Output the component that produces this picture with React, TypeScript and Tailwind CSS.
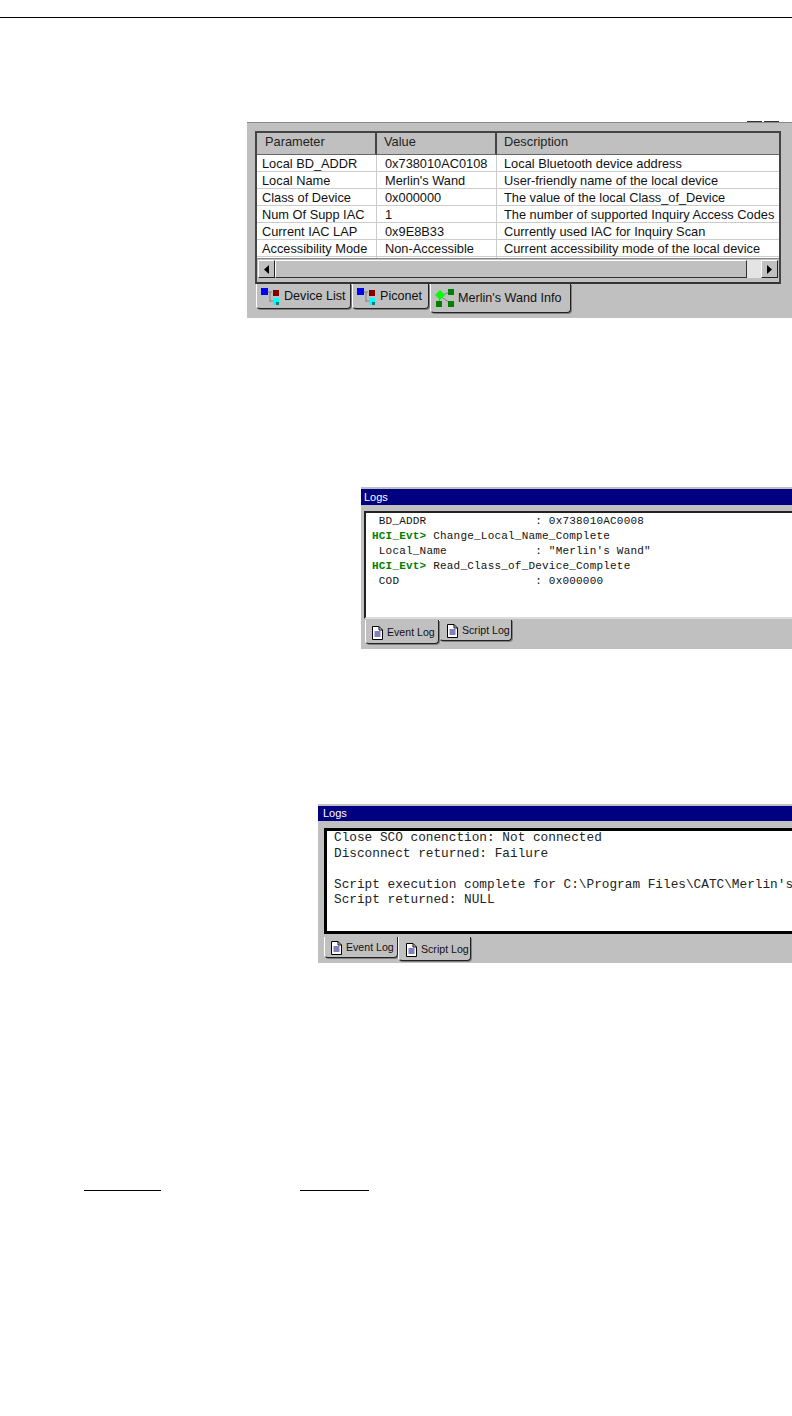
const sans = "font-['Liberation_Sans',Arial,sans-serif]";
const mono = "font-['Liberation_Mono','Courier_New',monospace]";

const rows = [
  ["Local BD_ADDR", "0x738010AC0108", "Local Bluetooth device address"],
  ["Local Name", "Merlin's Wand", "User-friendly name of the local device"],
  ["Class of Device", "0x000000", "The value of the local Class_of_Device"],
  ["Num Of Supp IAC", "1", "The number of supported Inquiry Access Codes"],
  ["Current IAC LAP", "0x9E8B33", "Currently used IAC for Inquiry Scan"],
  ["Accessibility Mode", "Non-Accessible", "Current accessibility mode of the local device"],
];

function NetIcon() {
  return (
    <svg width="20" height="19" viewBox="0 0 20 19" className="shrink-0">
      <path d="M7 5H12M10 5V15M10 14H13" stroke="#808080" fill="none" />
      <rect x="1" y="1" width="7" height="7" fill="#0000ff" />
      <rect x="13" y="3" width="6" height="6" fill="#800000" />
      <rect x="13" y="11" width="6" height="7" fill="#00ffff" />
      <rect x="16" y="15" width="3" height="3" fill="#008080" />
    </svg>
  );
}

function WandIcon() {
  return (
    <svg width="22" height="20" viewBox="0 0 22 20" className="shrink-0">
      <path d="M6 8L5 15M6 8L16 15M6 8L16 4" stroke="#808080" fill="none" />
      <path d="M6 2L11 7L6 12L1 7Z" fill="#00ff00" />
      <rect x="14" y="1" width="6" height="6" fill="#008000" />
      <rect x="2" y="13" width="6" height="6" fill="#008000" />
      <rect x="14" y="13" width="6" height="6" fill="#008000" />
    </svg>
  );
}

function DocIcon() {
  return (
    <svg width="12" height="14" viewBox="0 0 12 14" className="shrink-0">
      <path d="M1.5.5H8L11.5 4V13.5H1.5Z" fill="#fff" stroke="#000" />
      <path d="M8 .5V4H11.5" fill="none" stroke="#000" />
      <path d="M3.5 6H9.5M3.5 8H9.5M3.5 10H9.5" stroke="#000080" />
    </svg>
  );
}

function Tab({ active, className, children }: { active?: boolean; className: string; children: React.ReactNode }) {
  return (
    <div
      className={`flex items-center whitespace-nowrap border-l border-l-white border-r border-r-[#222] border-b border-b-[#222] rounded-b-[4px] shadow-[1px_1px_0_#808080] bg-[#c0c0c0] text-[#111] ${active ? "relative z-10" : ""} ${className}`}
    >
      {children}
    </div>
  );
}

function ArrowBtn({ dir }: { dir: "l" | "r" }) {
  return (
    <div className="w-[17px] h-[18px] bg-[#c0c0c0] border border-t-white border-l-white border-r-[#222] border-b-[#222] flex items-center justify-center shrink-0">
      <svg width="5" height="9" viewBox="0 0 5 9">
        <path d={dir === "l" ? "M5 0V9L0 4.5Z" : "M0 0V9L5 4.5Z"} fill="#000" />
      </svg>
    </div>
  );
}

function InfoPanel() {
  return (
    <div className={`ml-[247px] mt-[104px] w-[545px] h-[196px] bg-[#c0c0c0] border-t border-t-[#888] flex flex-col shrink-0 ${sans}`}>
      <div className="h-[0px] flex justify-end pr-[13px] gap-[2px]">
        <div className="w-[15px] h-[1px] bg-[#333] -mt-[2px]" />
        <div className="w-[15px] h-[1px] bg-[#333] -mt-[2px]" />
      </div>
      <div className="ml-[8px] mt-[8px] w-[526px] h-[153px] bg-white border-2 border-t-[#444] border-l-[#444] border-r-[#444] border-b-[#333] flex flex-col overflow-hidden shrink-0">
        <div className="h-[22px] bg-[#c0c0c0] grid grid-cols-[120px_120px_1fr] text-[12.8px] leading-[18px] text-[#222] shrink-0">
          <div className="pl-[8px] border-r-2 border-r-[#444] border-b border-b-[#666]">Parameter</div>
          <div className="pl-[7px] border-r-2 border-r-[#444] border-b border-b-[#666]">Value</div>
          <div className="pl-[7px] border-b border-b-[#666]">Description</div>
        </div>
        <div className="h-[103px] overflow-hidden shrink-0">
          {rows.map((r) => (
            <div key={r[0]} className="h-[17px] grid grid-cols-[120px_120px_1fr] text-[12.8px] leading-[17px] text-[#111] border-b border-b-[#ccc] whitespace-nowrap">
              <div className="pl-[5px] border-r border-r-[#ccc]">{r[0]}</div>
              <div className="pl-[8px] border-r border-r-[#ccc]">{r[1]}</div>
              <div className="pl-[7px] overflow-hidden">{r[2]}</div>
            </div>
          ))}
          <div className="h-[1px] grid grid-cols-[120px_120px_1fr]">
            <div className="border-r border-r-[#ccc]" />
            <div className="border-r border-r-[#ccc]" />
            <div />
          </div>
        </div>
        <div className="flex-1 bg-[#c0c0c0] flex items-start pt-[1px] px-[1px] border-t border-t-[#888]">
          <ArrowBtn dir="l" />
          <div className="w-[472px] h-[18px] bg-[#c0c0c0] border border-t-white border-l-white border-r-[#333] border-b-[#333]" />
          <div className="flex-1 h-[18px] bg-[#e4e4e4]" />
          <ArrowBtn dir="r" />
        </div>
      </div>
      <div className="ml-[9px] flex items-start text-[12.6px]">
        <Tab className="w-[95px] h-[25px] pl-[3px] gap-[4px]"><NetIcon /><span>Device List</span></Tab>
        <Tab className="w-[77px] h-[25px] pl-[3px] ml-[1px] gap-[4px]"><NetIcon /><span>Piconet</span></Tab>
        <Tab active className="w-[141px] h-[29px] pl-[3px] ml-[1px] gap-[2px]"><WandIcon /><span>Merlin's Wand Info</span></Tab>
      </div>
    </div>
  );
}

function LogTabs({ active, className }: { active: "event" | "script"; className: string }) {
  return (
    <div className={`flex items-start text-[10.6px] ${sans} ${className}`}>
      <Tab active={active === "event"} className={`w-[74px] pl-[5px] pt-[2px] gap-[4px] ${active === "event" ? "h-[24px]" : "h-[21px]"}`}><DocIcon /><span>Event Log</span></Tab>
      <Tab active={active === "script"} className={`w-[73px] pl-[6px] pt-[2px] gap-[4px] ${active === "script" ? "h-[24px]" : "h-[21px]"}`}><DocIcon /><span>Script Log</span></Tab>
    </div>
  );
}

function Ev() {
  return <span className="font-bold text-[#008000]">HCI_Evt&gt; </span>;
}

export default function App() {
  return (
    <div className="w-[792px] h-[1416px] bg-white overflow-hidden flex flex-col">
      <div className="mt-[17px] h-[1px] bg-black shrink-0" />
      <InfoPanel />

      <div className="ml-[361px] mt-[169px] w-[431px] h-[162px] bg-[#c0c0c0] flex flex-col shrink-0">
        <div className={`mt-[2px] h-[16px] bg-[#000080] text-white text-[11px] leading-[16px] pl-[3px] ${sans}`}>Logs</div>
        <div className={`ml-[3px] mt-[6px] h-[108px] bg-white border-t-2 border-l-2 border-[#222] border-b-2 border-b-[#ddd] pl-[6px] pt-[1px] text-[11px] leading-[15px] tracking-[0.2px] whitespace-pre text-[#111] ${mono}`}>
          <div>{" BD_ADDR                : 0x738010AC0008"}</div>
          <div><Ev />Change_Local_Name_Complete</div>
          <div>{" Local_Name             : \"Merlin's Wand\""}</div>
          <div><Ev />Read_Class_of_Device_Complete</div>
          <div>{" COD                    : 0x000000"}</div>
        </div>
        <LogTabs active="event" className="mt-[1px] ml-[4px]" />
      </div>

      <div className="ml-[318px] mt-[155px] w-[474px] h-[159px] bg-[#c0c0c0] flex flex-col shrink-0">
        <div className={`mt-[2px] h-[15px] bg-[#000080] text-white text-[11px] leading-[15px] pl-[5px] ${sans}`}>Logs</div>
        <div className={`ml-[6px] mt-[7px] h-[106px] bg-white border-t-[3px] border-l-[3px] border-b-[3px] border-black pl-[7px] text-[12.75px] leading-[15.5px] whitespace-pre text-[#222] overflow-hidden ${mono}`}>
          <div className="-mt-[1px]">Close SCO conenction: Not connected</div>
          <div>Disconnect returned: Failure</div>
          <div>&nbsp;</div>
          <div>Script execution complete for C:\Program Files\CATC\Merlin's</div>
          <div>Script returned: NULL</div>
        </div>
        <LogTabs active="script" className="mt-[3px] ml-[6px]" />
      </div>

      <div className="ml-[84px] mt-[227px] flex gap-[139px] shrink-0">
        <div className="w-[77px] h-[1px] bg-black" />
        <div className="w-[69px] h-[1px] bg-black" />
      </div>
    </div>
  );
}
